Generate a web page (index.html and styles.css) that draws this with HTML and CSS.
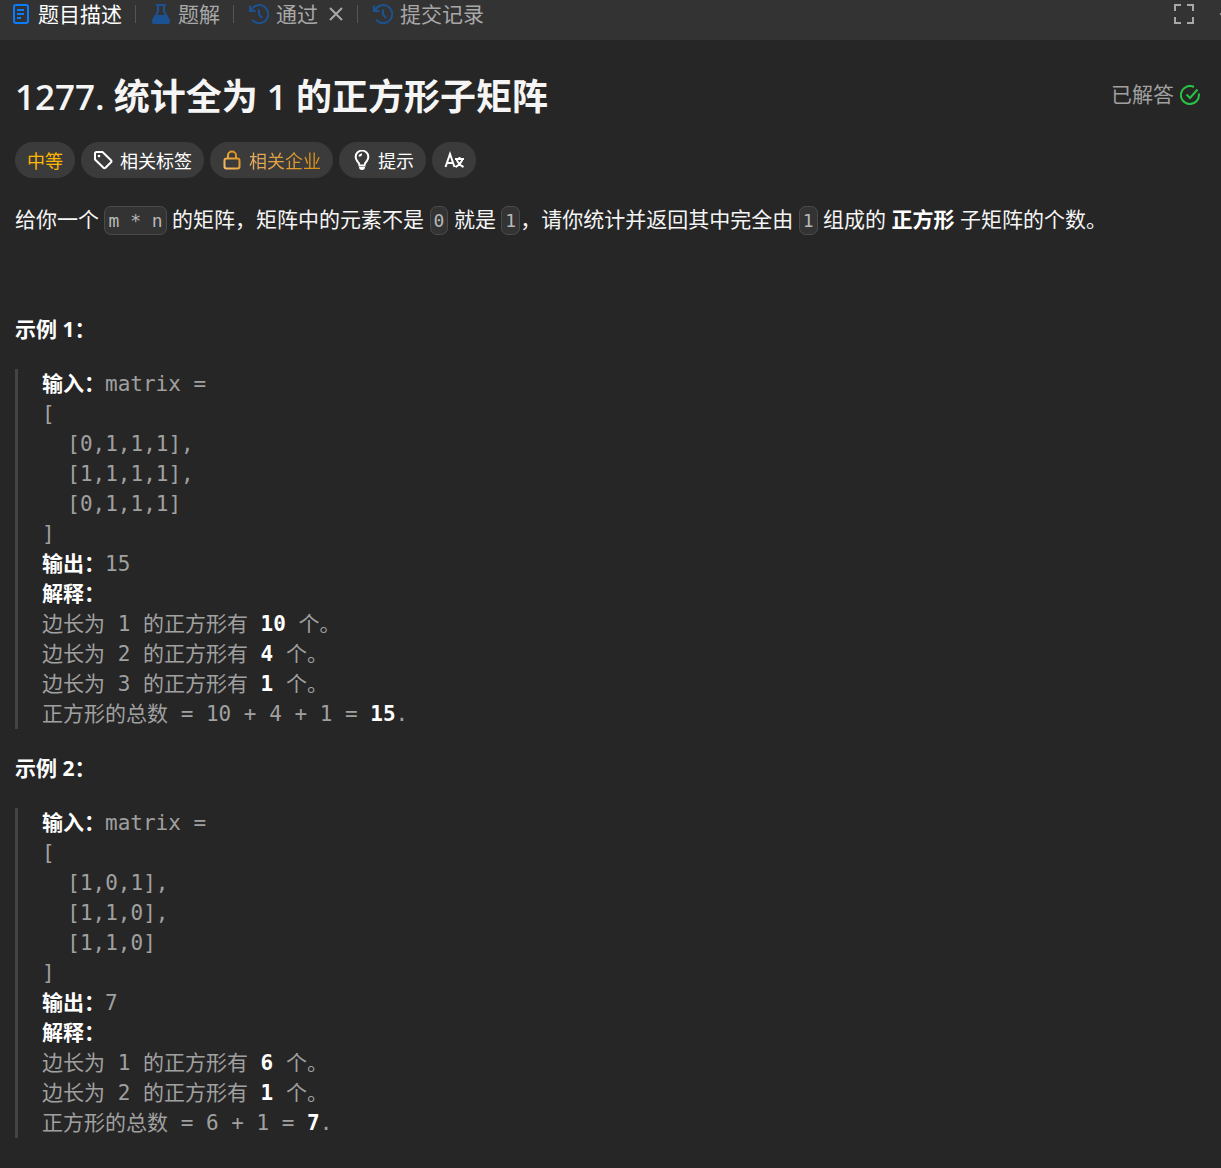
FILE: index.html
```html
<!DOCTYPE html>
<html lang="zh-CN">
<head>
    <meta charset="UTF-8">
    <meta name="viewport" content="width=device-width, initial-scale=1.0">
    <title>1277. 统计全为 1 的正方形子矩阵</title>
    <link rel="stylesheet" href="styles.css">
</head>
<body>

    <div class="tabbar">
        <button class="tab active">
            <svg class="icon" viewBox="0 0 20 20"><rect x="3" y="1" width="14" height="18" rx="2"/><path d="M6 6h7M6 10h7M6 14h4"/></svg>
            题目描述
        </button>
        <span class="divider"></span>
        <button class="tab">
            <svg class="icon" viewBox="0 0 20 20"><path d="M5 1h10M7 1v6.500L2 16.500Q1 19 3.500 19h13q2.500 0 1.500-2.500L13 7.500V1"/><path class="fill" d="M6 11h8l4 6-2 2H4l-2-2z"/></svg>
            题解
        </button>
        <span class="divider"></span>
        <button class="tab">
            <svg class="icon" viewBox="0 0 20 20"><path d="M2 6.500A9 9 0 1 1 3 15.500M1 1.500v5.500h5.500M10 5.500v5l3 3.500"/></svg>
            通过
        </button>
        <button class="close" aria-label="关闭">
            <svg viewBox="0 0 16 16"><path d="M2 2l12 12M14 2L2 14"/></svg>
        </button>
        <span class="divider"></span>
        <button class="tab">
            <svg class="icon" viewBox="0 0 20 20"><path d="M2 6.500A9 9 0 1 1 3 15.500M1 1.500v5.500h5.500M10 5.500v5l3 3.500"/></svg>
            提交记录
        </button>
        <div class="tools">
            <button class="tool" aria-label="全屏">
                <svg viewBox="0 0 20 20"><path d="M1 7V1h6M13 1h6v6M19 13v6h-6M7 19H1v-6"/></svg>
            </button>
            <button class="tool" aria-label="收起">
                <svg viewBox="0 0 20 20"><path d="M11 3l-8 7 8 7"/></svg>
            </button>
        </div>
    </div>

    <div class="container">
        <div class="title-row">
            <h1><span class="num">1277. </span>统计全为<span class="num"> 1 </span>的正方形子矩阵</h1>
            <div class="status">
                已解答
                <svg viewBox="0 0 20 20"><path d="M14 2A9 9 0 1 0 18.800 8.500M6.500 9.500l3.500 3.500 7.500-8.500"/></svg>
            </div>
        </div>

        <div class="tags">
            <div class="tag medium">中等</div>
            <button class="tag">
                <svg viewBox="0 0 20 20"><path d="M2 3.500Q2 2 3.500 2H9.500L18 10.200Q19 11.200 18 12.200L12.500 17.700Q11.500 18.700 10.500 17.700L2 9.500z"/><circle class="dot" cx="6" cy="6" r="1.300"/></svg>
                相关标签
            </button>
            <button class="tag company">
                <svg viewBox="0 0 20 20">
                    <defs>
                        <linearGradient id="gold" x1="0" y1="1" x2="1" y2="0">
                            <stop offset="0" stop-color="#f5be6c"/>
                            <stop offset="1" stop-color="#d68a10"/>
                        </linearGradient>
                    </defs>
                    <path stroke="url(#gold)" d="M6 8.500V5.500a4 4 0 0 1 8 0v3M4.500 8.500h11q2 0 2 2v6q0 2-2 2h-11q-2 0-2-2v-6q0-2 2-2z"/>
                </svg>
                <span>相关企业</span>
            </button>
            <button class="tag">
                <svg viewBox="0 0 20 20"><path d="M8.500 15.500q0-2-2.300-4.500a6.300 6.300 0 1 1 9.600 0q-2.300 2.500-2.300 4.500zM8.300 6.500q.5-2 2.700-2.300"/><path class="dot" d="M8 17h6q0 3-3 3t-3-3z"/></svg>
                提示
            </button>
            <button class="tag" aria-label="翻译">
                <svg viewBox="0 0 20 20"><path d="M1.500 17L6 4l4.500 13M3 13h6M11 9h9M15.500 7v2M18.500 9q-1.500 5-7 8M12.500 9q1.500 5 7 8"/></svg>
            </button>
        </div>

        <div class="content">
            <p>给你一个 <code>m * n</code> 的矩阵，矩阵中的元素不是 <code>0</code> 就是 <code>1</code>，请你统计并返回其中完全由 <code>1</code> 组成的 <strong>正方形</strong> 子矩阵的个数。</p>
            <p>&nbsp;</p>
            <p><strong>示例 1：</strong></p>
<pre><strong>输入：</strong>matrix =
[
&nbsp; [0,1,1,1],
&nbsp; [1,1,1,1],
&nbsp; [0,1,1,1]
]
<strong>输出：</strong>15
<strong>解释：</strong>
边长为 1 的正方形有 <strong>10</strong> 个。
边长为 2 的正方形有 <strong>4</strong> 个。
边长为 3 的正方形有 <strong>1</strong> 个。
正方形的总数 = 10 + 4 + 1 = <strong>15</strong>.</pre>
            <p><strong>示例 2：</strong></p>
<pre><strong>输入：</strong>matrix =
[
&nbsp; [1,0,1],
&nbsp; [1,1,0],
&nbsp; [1,1,0]
]
<strong>输出：</strong>7
<strong>解释：</strong>
边长为 1 的正方形有 <strong>6</strong> 个。
边长为 2 的正方形有 <strong>1</strong> 个。
正方形的总数 = 6 + 1 = <strong>7</strong>.</pre>
        </div>
    </div>

</body>
</html>
```
FILE: styles.css
```css
* {
    box-sizing: border-box;
}

body {
    margin: 0;
    background-color: #262626;
    color: #f5f5f5;
    font-family: "Open Sans", "Noto Sans CJK SC", sans-serif;
    font-size: 21px;
    overflow-x: hidden;
}

button {
    font-family: inherit;
    color: inherit;
    background: none;
    border: none;
    padding: 0;
    margin: 0;
    cursor: pointer;
}

svg {
    display: block;
    flex: none;
    width: 20px;
    height: 20px;
    fill: none;
    stroke: currentColor;
    stroke-width: 2;
}

.tabbar {
    display: flex;
    align-items: center;
    height: 40px;
    padding: 0 0 13px 11px;
    background-color: #333;
    color: #a8a8a8;
}

.tab {
    display: flex;
    align-items: center;
    gap: 7px;
    font-size: 21px;
    line-height: 28px;
    white-space: nowrap;
}

.tab .icon {
    color: #1c5292;
}

.tab .fill {
    fill: currentColor;
    stroke: none;
}

.tab.active {
    color: #fff;
}

.tab.active .icon {
    color: #0a7cff;
}

.divider {
    width: 1px;
    height: 18px;
    margin: 0 15px 0 13px;
    background-color: #555;
}

.close {
    margin-left: 10px;
}

.close svg {
    width: 16px;
    height: 16px;
}

.tools {
    display: flex;
    gap: 24px;
    margin-left: auto;
    margin-right: -17px;
}

.container {
    padding: 32px 15px 6px;
}

.title-row {
    display: flex;
    align-items: flex-start;
    justify-content: space-between;
    padding-right: 6px;
}

h1 {
    margin: 0;
    font-size: 36px;
    font-weight: 600;
    line-height: 50px;
}

.num {
    font-size: 35px;
    white-space: pre;
}

.status {
    display: flex;
    align-items: center;
    gap: 6px;
    line-height: 45px;
    color: #a0a0a0;
}

.status svg {
    color: #28c244;
}

.tags {
    display: flex;
    flex-wrap: wrap;
    gap: 6px;
    margin-top: 20px;
}

.tag {
    display: flex;
    align-items: center;
    gap: 7px;
    height: 36px;
    padding: 0 12px;
    border-radius: 18px;
    background-color: #3b3b3b;
    font-size: 18px;
    color: #fff;
}

.tag .dot {
    fill: currentColor;
    stroke: none;
}

.medium {
    color: #ffb800;
}

.company span {
    background: linear-gradient(90deg, #e5ae62, #d98d12);
    background-clip: text;
    color: transparent;
}

.content {
    margin-top: 26px;
}

.content p {
    margin: 0 0 24px;
    line-height: 31px;
}

strong {
    color: #fff;
    font-weight: 700;
}

code {
    padding: 3px;
    border: 1px solid #4a4a4a;
    border-radius: 7px;
    background-color: #333;
    color: #b8b8b8;
    font-family: "DejaVu Sans Mono", monospace;
    font-size: 18px;
    line-height: 21px;
}

pre {
    margin: 0 0 24px;
    padding-left: 24px;
    border-left: 3px solid #444;
    color: #a0a0a0;
    font-family: "DejaVu Sans Mono", "Noto Sans CJK SC", monospace;
    font-size: 21px;
    line-height: 30px;
    white-space: pre-wrap;
}
```
